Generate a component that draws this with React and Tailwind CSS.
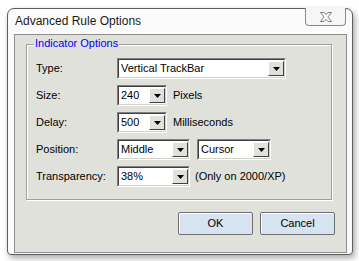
import React from 'react';

const font = { fontFamily: '"Liberation Sans", Arial, sans-serif' };

const Arrow = () => (
  <svg width="7" height="4" viewBox="0 0 7 4"><path d="M0 0h7L3.5 4z" fill="#000" /></svg>
);

const Combo = ({ value, width }) => (
  <div className={`h-[21px] ${width} border-t border-l border-t-[#808080] border-l-[#808080] border-r border-b border-r-white border-b-white`}>
    <div className="h-full flex items-center bg-white border-t border-l border-t-[#404040] border-l-[#404040] border-r border-b border-r-[#d4d0c8] border-b-[#d4d0c8]">
      <span className="flex-1 pl-[2px] text-[11px] text-black leading-none">{value}</span>
      <div className="w-[16px] h-[15px] flex items-center justify-center bg-[#e0e0dc] border-t border-l border-t-white border-l-white border-r border-b border-r-[#404040] border-b-[#404040]">
        <Arrow />
      </div>
    </div>
  </div>
);

const Row = ({ label, children }) => (
  <div className="flex items-center h-[21px]">
    <span className="w-[81px] text-[11px] text-black">{label}</span>
    {children}
  </div>
);

const Btn = ({ children }) => (
  <button className="w-[75px] h-[23px] bg-[#d6e3f0] border border-[#6f6f6f] rounded-[2px] text-[11px] text-black shadow-[inset_1px_1px_0_#ffffff]">
    {children}
  </button>
);

export default function App() {
  return (
    <div className="w-[359px] h-[261px] bg-white overflow-hidden pt-[8px] pl-[7px]" style={font}>
      <div className="w-[346px] h-[247px] rounded-t-[7px] rounded-b-[4px] border border-[#5d5d5d] bg-[#fbfbfb] shadow-[2px_3px_6px_rgba(0,0,0,0.35)] flex flex-col">
        {/* title bar */}
        <div className="h-[25px] flex items-start relative">
          <span className="pl-[7px] pt-[6px] text-[12px] text-[#1a1a1a] leading-none">Advanced Rule Options</span>
          <div className="absolute right-[6px] -top-[1px] w-[41px] h-[18px] border border-[#8a8a8a] border-t-0 rounded-b-[4px] bg-[#f6f6f6] flex items-center justify-center">
            <svg width="14" height="12" viewBox="0 0 14 12">
              <path d="M1.5 1.5h3.5l2 2.2 2-2.2h3.5l-3.7 4.5 3.7 4.5h-3.5l-2-2.2-2 2.2h-3.5l3.7-4.5z" fill="#fff" stroke="#7c7c7c" strokeWidth="1" strokeLinejoin="round" />
            </svg>
          </div>
        </div>
        {/* client */}
        <div className="ml-[6px] w-[333px] h-[219px] border border-[#8e8e8e] bg-[#e1e1dc]">
          <div className="ml-[11px] mt-[9px] w-[306px] h-[156px] relative border border-[#a0a09c] shadow-[1px_1px_0_#ffffff,inset_1px_1px_0_#ffffff]">
            <span className="absolute left-[7px] -top-[7px] px-[1px] bg-[#e1e1dc] text-[11px] leading-none text-[#0000ff]">Indicator Options</span>
            <div className="pl-[9px] pt-[13px] flex flex-col gap-[6px]">
              <Row label="Type:"><Combo value="Vertical TrackBar" width="w-[169px]" /></Row>
              <Row label="Size:">
                <Combo value="240" width="w-[50px]" />
                <span className="ml-[6px] text-[11px]">Pixels</span>
              </Row>
              <Row label="Delay:">
                <Combo value="500" width="w-[50px]" />
                <span className="ml-[6px] text-[11px]">Milliseconds</span>
              </Row>
              <Row label="Position:">
                <Combo value="Middle" width="w-[73px]" />
                <div className="ml-[7px]"><Combo value="Cursor" width="w-[74px]" /></div>
              </Row>
              <Row label="Transparency:">
                <Combo value="38%" width="w-[73px]" />
                <span className="ml-[5px] text-[11px]">(Only on 2000/XP)</span>
              </Row>
            </div>
          </div>
          <div className="mt-[12px] ml-[163px] flex gap-[7px]">
            <Btn>OK</Btn>
            <Btn>Cancel</Btn>
          </div>
        </div>
      </div>
    </div>
  );
}
